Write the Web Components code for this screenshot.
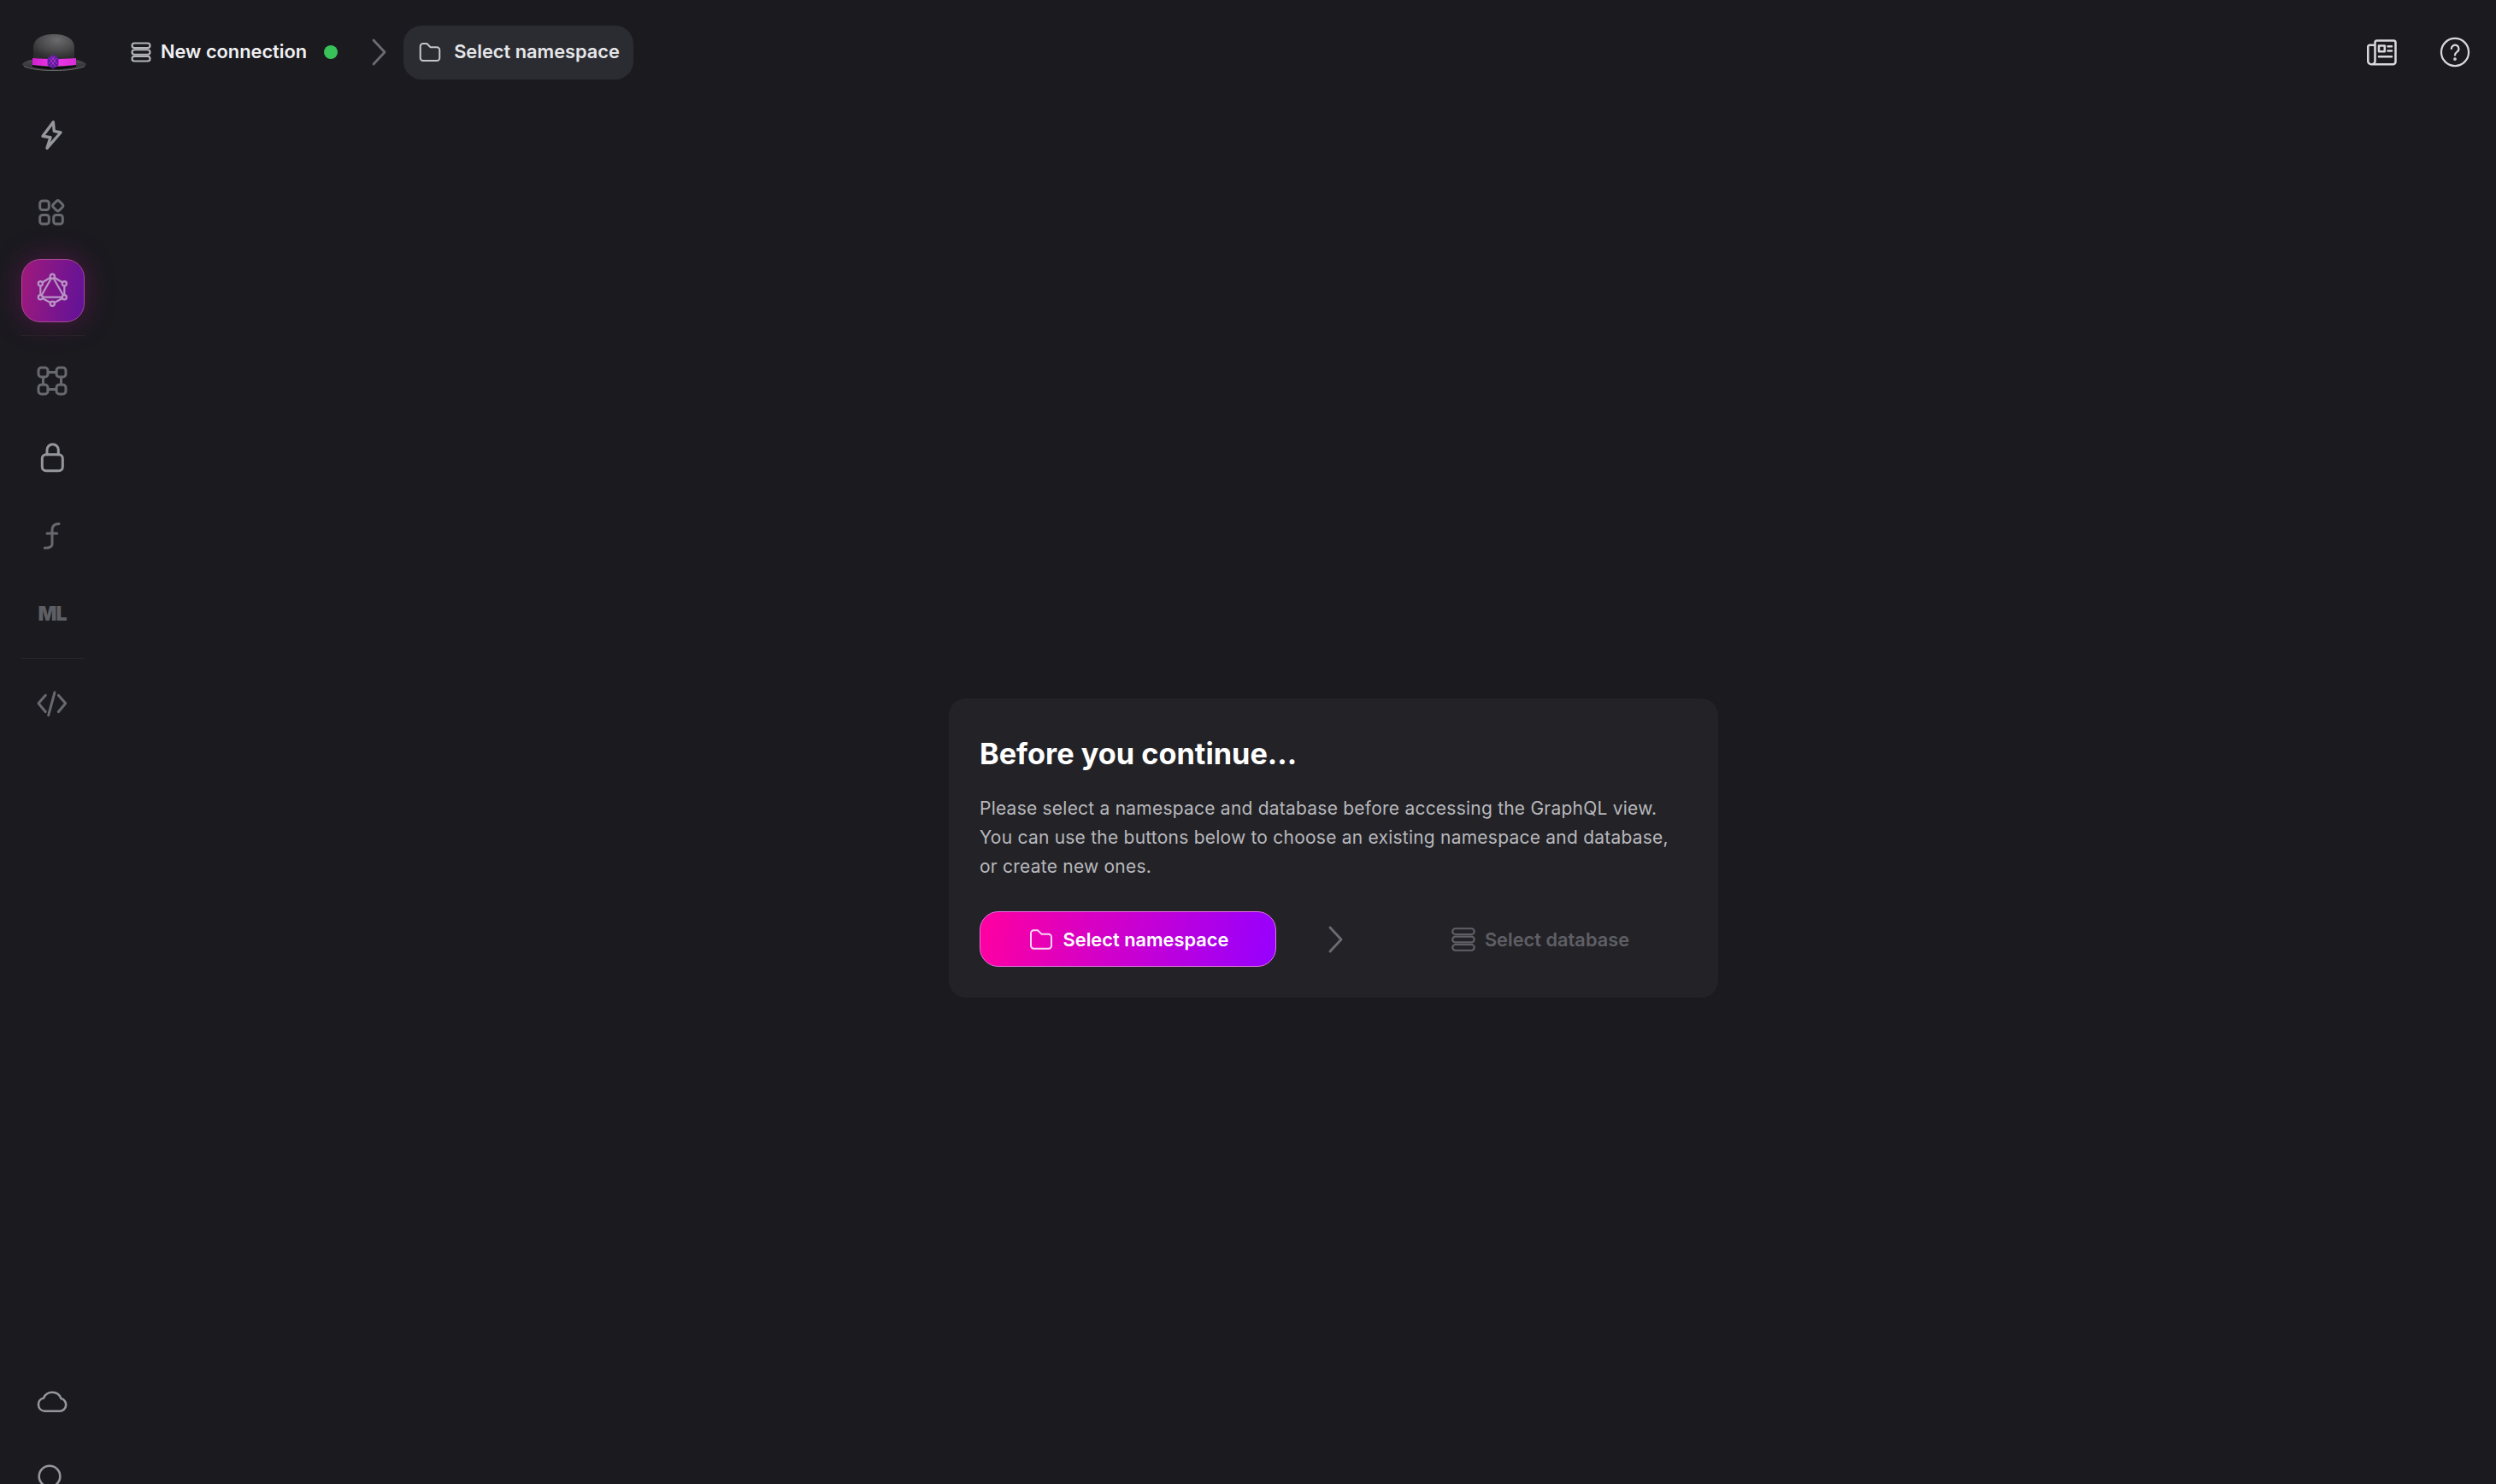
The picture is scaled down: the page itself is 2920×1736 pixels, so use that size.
<!DOCTYPE html>
<html lang="en">
<head>
<meta charset="utf-8">
<title>Surrealist</title>
<style>
  html, body { margin: 0; height: 100%; background: #1a1a1f; overflow: hidden; }
  body { font-family: Inter, "Liberation Sans", sans-serif; }
</style>
</head>
<body>
<app-shell>
  <side-bar slot="side"></side-bar>
  <top-bar slot="top"></top-bar>
  <notice-card slot="main"></notice-card>
</app-shell>

<script>
const ICONS = {
  // nav icons share a 74 box, same size as the nav tile
  bolt: '<path d="M38.300 21.700 26 38.300l9 1.400-4 12.600L47 34l-7.700-1.700z"/>',
  grid: '<rect x="22.700" y="23" width="10.600" height="10.600" rx="3"/><rect x="22.700" y="39.400" width="10.600" height="10.600" rx="3"/><rect x="38.700" y="39.400" width="10.600" height="10.600" rx="3"/><rect x="38.700" y="23.700" width="10" height="10" rx="2.600" transform="rotate(45 43.700 28.700)"/>',
  graphql: '<path d="M36.300 20.300 50.300 28.700V44.700L36.300 52.300 22.300 44.700V28.700z"/><path d="M36.300 20.300 50.300 44.700H22.300z"/><g fill="#8f1a93"><circle cx="36.300" cy="20.300" r="2.600"/><circle cx="50.300" cy="28.700" r="2.600"/><circle cx="50.300" cy="44.700" r="2.600"/><circle cx="36.300" cy="52.300" r="2.600"/><circle cx="22.300" cy="44.700" r="2.600"/><circle cx="22.300" cy="28.700" r="2.600"/></g>',
  network: '<rect x="21" y="22" width="11" height="11" rx="3.400"/><rect x="42" y="22" width="11" height="11" rx="3.400"/><rect x="21" y="42" width="11" height="11" rx="3.400"/><rect x="42" y="42" width="11" height="11" rx="3.400"/><path d="M32 27.500h10M32 47.500h10M26.500 33v9M47.500 33v9"/>',
  lock: '<rect x="25.300" y="32.700" width="24" height="19" rx="4.500"/><path d="M31 32.700v-5.400a6.600 6.600 0 0 1 13.300 0v5.400"/>',
  func: '<path d="M45 22.700c-5 0-8 2.300-8 7.300v16.700c0 3-3 4.300-8.700 4.300M31 34h11.700"/>',
  code: '<path d="M29.300 27.300 21 36.700l8.300 10M44.300 27.300l8.400 9.400-8.400 10M40 24l-7.300 26.700"/>',
  cloud: '<path d="M28 46.700H46a7.400 7.400 0 0 0 1.500-14.600A11 11 0 0 0 27 31.500a7.700 7.700 0 0 0 1 15.200z"/>',
  circle: '<circle cx="34" cy="37" r="12.300"/>',
  // 24 box
  server: '<rect x="3" y="3" width="18" height="4.800" rx="2.400"/><rect x="3" y="9.600" width="18" height="4.800" rx="2.400"/><rect x="3" y="16.200" width="18" height="4.800" rx="2.400"/>',
  folder: '<path d="M3 6.500A2.500 2.500 0 0 1 5.500 4h3.600l3.400 3.400h6A2.500 2.500 0 0 1 21 9.900v7.600a2.500 2.500 0 0 1-2.500 2.500h-13A2.500 2.500 0 0 1 3 17.500z"/>',
  chevron: '<path d="M1 1 14 15 1 29"/>',
  news: '<path d="M7 4.500A1.500 1.500 0 0 1 8.500 3h13A1.500 1.500 0 0 1 23 4.500v15a2 2 0 0 1-2 2H4a2.500 2.500 0 0 1-2.500-2.500V7.500A1.300 1.300 0 0 1 3 6.500h4M7 4.500V19a2.500 2.500 0 0 1-2.500 2.500"/><rect x="10" y="7" width="4.500" height="4.500"/><path d="M17 7.500h3M17 11h3M10 15.500h10"/>',
  help: '<circle cx="12" cy="12" r="10.700"/><path d="M9.200 9.300a2.900 2.900 0 1 1 4.300 2.600c-1 .6-1.500 1.200-1.500 2.400"/><circle cx="12" cy="17.400" r=".5"/>'
};

class AppIcon extends HTMLElement {
  connectedCallback() {
    const name = this.getAttribute("name");
    const box = this.getAttribute("box") || "24";
    const boxH = this.getAttribute("box-h") || box;
    const stroke = this.getAttribute("stroke") || "2";
    this.attachShadow({ mode: "open" }).innerHTML = `
      <style>
        :host { display: block; flex: none; color: inherit; line-height: 0; }
        svg { display: block; width: 100%; height: 100%; overflow: visible; }
      </style>
      <svg viewBox="0 0 ${box} ${boxH}" fill="none" stroke="currentColor" stroke-width="${stroke}" stroke-linecap="round" stroke-linejoin="round">${ICONS[name]}</svg>
    `;
  }
}
customElements.define("app-icon", AppIcon);

class AppShell extends HTMLElement {
  constructor() {
    super();
    this.attachShadow({ mode: "open" }).innerHTML = `
      <style>
        :host { display: grid; grid-template-columns: 124px 1fr; grid-template-rows: 124px 1fr; width: 100%; height: 100vh; overflow: hidden; color: #fff; }
        .side { grid-row: 1 / 3; min-height: 0; }
        .main { display: flex; align-items: center; justify-content: center; padding: 124px 0 0 76px; min-height: 0; }
      </style>
      <div class="side"><slot name="side"></slot></div>
      <slot name="top"></slot>
      <div class="main"><slot name="main"></slot></div>
    `;
  }
}
customElements.define("app-shell", AppShell);

class HatLogo extends HTMLElement {
  constructor() {
    super();
    this.attachShadow({ mode: "open" }).innerHTML = `
      <style>
        :host { display: block; width: 80px; height: 50px; }
        svg { display: block; overflow: visible; }
      </style>
      <svg width="80" height="50" viewBox="0 0 80 50">
        <defs>
          <radialGradient id="crown" cx=".58" cy=".22" r=".75">
            <stop offset="0" stop-color="#6b6b6d"/>
            <stop offset=".55" stop-color="#4b4b4d"/>
            <stop offset="1" stop-color="#2c2c2e"/>
          </radialGradient>
          <linearGradient id="band" x1="0" y1="0" x2="1" y2="0">
            <stop offset="0" stop-color="#d21fd0"/>
            <stop offset=".5" stop-color="#f03ae6"/>
            <stop offset="1" stop-color="#d92cd8"/>
          </linearGradient>
          <linearGradient id="brim" x1="0" y1="0" x2="0" y2="1">
            <stop offset="0" stop-color="#4a4a4c"/>
            <stop offset="1" stop-color="#2a2a2c"/>
          </linearGradient>
        </defs>
        <path d="M4 39c2-3 8-5 13-5h47c6 0 12 2 15 5 0 4-17 8-38 8S4 43 4 39z" fill="url(#brim)"/>
        <path d="M6 41.500c8 3.500 20 5 35 5s27-1.500 36-5" fill="none" stroke="#6a6a6c" stroke-width="1"/>
        <path d="M17 34V20C17 9 27 4 41 4s24 5 24 16v14z" fill="url(#crown)"/>
        <path d="M16 40c8 1.600 17 2.500 25 2.500s17-.9 26-2.500v2c-8 1.900-17 2.800-26 2.800S24 43.900 16 42z" fill="#08080a"/>
        <path d="M16 32c8 .8 17 1 25 1s17-.2 26-1v8c-9 1-18 1.300-26 1.300s-17-.3-25-1.300z" fill="url(#band)"/>
        <path d="M40 28.500l6 3.600v8l-6 4-6-4v-8z" fill="#5a1a9c" stroke="#6d1fae" stroke-width="1"/>
        <path d="M36 32l7 10M38 30l7 9M44 32l-7 10M42 30l-7 9" stroke="#c23cd0" stroke-width=".8" fill="none"/>
      </svg>
    `;
  }
}
customElements.define("hat-logo", HatLogo);

class NavItem extends HTMLElement {
  connectedCallback() {
    const icon = this.getAttribute("icon");
    const label = this.getAttribute("label");
    const stroke = this.getAttribute("stroke") || "3";
    this.attachShadow({ mode: "open" }).innerHTML = `
      <style>
        :host { display: flex; align-items: center; justify-content: center; width: 74px; height: 74px; border-radius: 22px; box-sizing: border-box; color: #68696e; }
        :host([bright]) { color: #96979c; }
        :host([active]) {
          color: #b795c4;
          background: linear-gradient(100deg, #a01a7c, #5f1299);
          border: 1px solid #a8498f;
          box-shadow: 0 0 34px rgba(180, 20, 140, .34);
        }
        app-icon { width: 74px; height: 74px; margin-left: -2px; }
        :host([active]) app-icon { margin: -1px; }
        .txt { font: 900 23px/1 Inter, "Liberation Sans", sans-serif; letter-spacing: -1px; color: #5e5f64; margin-left: -2px; }
      </style>
      ${label ? `<span class="txt">${label}</span>` : `<app-icon name="${icon}" box="74" stroke="${stroke}"></app-icon>`}
    `;
  }
}
customElements.define("nav-item", NavItem);

class SideBar extends HTMLElement {
  constructor() {
    super();
    this.attachShadow({ mode: "open" }).innerHTML = `
      <style>
        :host { display: flex; flex-direction: column; align-items: center; height: 100%; box-sizing: border-box; padding: 36px 0 0 0; }
        .logo { height: 85px; margin-left: -1px; }
        .group { display: flex; flex-direction: column; gap: 17px; }
        hr { width: 74px; height: 1px; border: 0; margin: 15px 0; background: #26262b; }
        hr.tint { background: #2a2028; }
        .bottom { margin-top: auto; margin-bottom: -28px; gap: 12px; }
      </style>
      <div class="logo"><hat-logo></hat-logo></div>
      <div class="group">
        <nav-item icon="bolt" bright stroke="3.400"></nav-item>
        <nav-item icon="grid"></nav-item>
        <nav-item icon="graphql" active stroke="2.200"></nav-item>
      </div>
      <hr class="tint">
      <div class="group">
        <nav-item icon="network"></nav-item>
        <nav-item icon="lock" bright stroke="3"></nav-item>
        <nav-item icon="func" stroke="3"></nav-item>
        <nav-item label="ML"></nav-item>
      </div>
      <hr>
      <div class="group">
        <nav-item icon="code" stroke="3"></nav-item>
      </div>
      <div class="group bottom">
        <nav-item icon="cloud" bright stroke="2.600"></nav-item>
        <nav-item icon="circle" bright stroke="2.600"></nav-item>
      </div>
    `;
  }
}
customElements.define("side-bar", SideBar);

class TopBar extends HTMLElement {
  constructor() {
    super();
    this.attachShadow({ mode: "open" }).innerHTML = `
      <style>
        :host { display: flex; align-items: center; height: 122px; box-sizing: border-box; padding: 0 0 0 27px; font: 600 21.8px/1 Inter, "Liberation Sans", sans-serif; }
        .crumb { display: flex; align-items: center; gap: 9px; color: #f0f0f2; }
        .crumb app-icon { width: 28px; height: 28px; color: #b4b5b9; }
        .dot { width: 16px; height: 16px; border-radius: 50%; background: #3ac25a; margin-left: 20px; }
        .chev { width: 15px; height: 30px; margin: 0 21px 0 41px; color: #6b6c72; }
        .pill { display: flex; align-items: center; gap: 13px; height: 63px; padding: 0 16px 0 16px; border-radius: 21px; background: #2b2c32; color: #e6e6e9; }
        .pill app-icon { width: 30px; height: 30px; color: #c4c5c9; }
        .right { margin-left: auto; display: flex; align-items: center; gap: 50px; padding-right: 30px; color: #d8d8dc; }
        .right app-icon { width: 36px; height: 36px; }
      </style>
      <span class="crumb"><app-icon name="server" stroke="1.800"></app-icon>New connection</span>
      <span class="dot"></span>
      <app-icon class="chev" name="chevron" box="15" box-h="30" stroke="2.800"></app-icon>
      <span class="pill"><app-icon name="folder" stroke="1.600"></app-icon>Select namespace</span>
      <span class="right">
        <app-icon name="news" stroke="1.700"></app-icon>
        <app-icon name="help" stroke="1.500"></app-icon>
      </span>
    `;
  }
}
customElements.define("top-bar", TopBar);

class NoticeCard extends HTMLElement {
  constructor() {
    super();
    this.attachShadow({ mode: "open" }).innerHTML = `
      <style>
        :host { display: block; width: 900px; box-sizing: border-box; padding: 36px; border-radius: 20px; background: #232327; font-family: Inter, "Liberation Sans", sans-serif; }
        h2 { margin: 0; font-size: 34.3px; line-height: 58px; font-weight: 700; color: #fff; }
        p { margin: 18px 0 35px; font-size: 21px; line-height: 34px; font-weight: 400; color: #b8b8bd; letter-spacing: .225px; white-space: nowrap; }
        .row { display: flex; align-items: center; }
        .chev { width: 15px; height: 30px; margin: 0 57px 0 62px; color: #6b6c72; }
        .btn { flex: none; width: 347px; height: 65px; box-sizing: border-box; display: flex; align-items: center; justify-content: center; border-radius: 22px; font-size: 21.8px; font-weight: 600; }
        .primary { gap: 10px; color: #fff; background: linear-gradient(100deg, #ff00a0, #9600ff); border: 1px solid #e271e0; }
        .primary app-icon { width: 32px; height: 32px; color: #f8d8f5; }
        .off { gap: 8px; color: #5f5f65; }
        .off app-icon { width: 34px; height: 34px; }
      </style>
      <h2>Before you continue...</h2>
      <p>Please select a namespace and database before accessing the GraphQL view.<br>You can use the buttons below to choose an existing namespace and database,<br>or create new ones.</p>
      <div class="row">
        <span class="btn primary"><app-icon name="folder" stroke="1.500"></app-icon>Select namespace</span>
        <app-icon class="chev" name="chevron" box="15" box-h="30" stroke="2.800"></app-icon>
        <span class="btn off"><app-icon name="server" stroke="1.500"></app-icon>Select database</span>
      </div>
    `;
  }
}
customElements.define("notice-card", NoticeCard);
</script>
</body>
</html>
